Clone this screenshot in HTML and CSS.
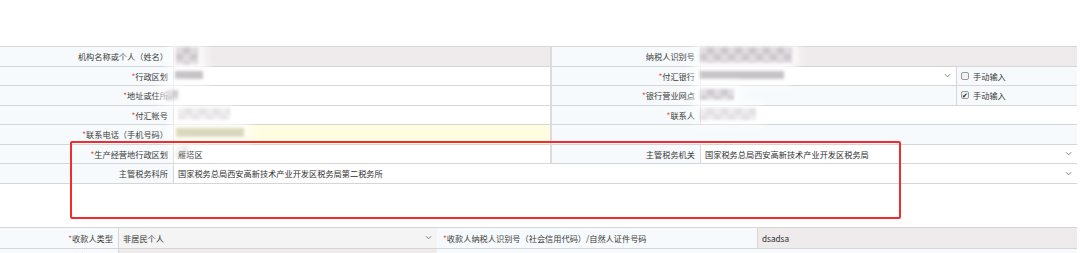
FILE: index.html
```html
<!DOCTYPE html>
<html lang="zh-CN">
<head>
    <meta charset="UTF-8">
    <title>付汇登记</title>
    <link rel="stylesheet" href="styles.css">
</head>
<body>
    <div class="page">
        <div class="form-grid top-grid">
            <!-- 第一行 -->
            <div class="cell label">机构名称或个人（姓名）</div>
            <div class="cell value disabled"></div>
            <div class="cell label sep">纳税人识别号</div>
            <div class="cell value disabled span2"></div>

            <!-- 第二行 -->
            <div class="cell label"><i>*</i>行政区划</div>
            <div class="cell value"></div>
            <div class="cell label sep"><i>*</i>付汇银行</div>
            <div class="cell value select"><span></span><svg class="chevron" viewBox="0 0 8 5"><polyline points="1,1 4,4 7,1"/></svg></div>
            <div class="cell check"><span class="box"></span>手动输入</div>

            <!-- 第三行 -->
            <div class="cell label"><i>*</i>地址或住所</div>
            <div class="cell value"></div>
            <div class="cell label sep"><i>*</i>银行营业网点</div>
            <div class="cell value soft"></div>
            <div class="cell check"><span class="box checked">&#10004;</span>手动输入</div>

            <!-- 第四行 -->
            <div class="cell label"><i>*</i>付汇帐号</div>
            <div class="cell value"></div>
            <div class="cell label sep"><i>*</i>联系人</div>
            <div class="cell value span2"></div>

            <!-- 第五行 -->
            <div class="cell label"><i>*</i>联系电话（手机号码）</div>
            <div class="cell value yellow"></div>
            <div class="cell label sep span3"></div>

            <!-- 第六行 -->
            <div class="cell label"><i>*</i>生产经营地行政区划</div>
            <div class="cell value">雁塔区</div>
            <div class="cell label sep">主管税务机关</div>
            <div class="cell value select span2"><span>国家税务总局西安高新技术产业开发区税务局</span><svg class="chevron" viewBox="0 0 8 5"><polyline points="1,1 4,4 7,1"/></svg></div>

            <!-- 第七行 -->
            <div class="cell label">主管税务科所</div>
            <div class="cell value select span4"><span>国家税务总局西安高新技术产业开发区税务局第二税务所</span><svg class="chevron" viewBox="0 0 8 5"><polyline points="1,1 4,4 7,1"/></svg></div>
        </div>

        <div class="gap-space"></div>

        <div class="form-grid bottom-grid">
            <div class="cell label"><i>*</i>收款人类型</div>
            <div class="cell value select grayish"><span>非居民个人</span><svg class="chevron" viewBox="0 0 8 5"><polyline points="1,1 4,4 7,1"/></svg></div>
            <div class="cell label left"><i>*</i>收款人纳税人识别号（社会信用代码）/自然人证件号码</div>
            <div class="cell value disabled">dsadsa</div>

            <div class="cell label last"><i>*</i>收款人名称</div>
            <div class="cell value disabled"></div>
            <div class="cell label span2"></div>
        </div>

        <!-- 打码区域 -->
        <div class="mosaic m1"></div>
        <div class="mosaic m2"></div>
        <div class="mosaic m3 dark"></div>
        <div class="mosaic m4 dark"></div>
        <div class="mosaic m5"></div>
        <div class="mosaic m6"></div>
        <div class="mosaic m7"></div>
        <div class="mosaic m8"></div>
        <div class="mosaic m9 olive"></div>
        <div class="mosaic m10"></div>

        <!-- 红框标注 -->
        <div class="highlight"></div>
    </div>
</body>
</html>
```

FILE: styles.css
```css
* {
    margin: 0;
    padding: 0;
    box-sizing: border-box;
}

body {
    background: #fff;
    font-family: "Noto Sans CJK SC", "Microsoft YaHei", sans-serif;
    font-size: 8.2px;
    color: #3a3a3a;
}

.page {
    position: relative;
    width: 1080px;
    height: 253px;
    overflow: hidden;
    padding-top: 46px;
}

/* 表格 */
.form-grid {
    display: grid;
    width: 1077px;
    border-top: 1px solid #d6d6d6;
    border-right: 1px solid #d6d6d6;
}

.top-grid {
    grid-template-columns: 173px 377px 150px 256px 121px;
    grid-auto-rows: 19.5px;
}

.bottom-grid {
    grid-template-columns: 118px 319px 320px 320px;
    grid-auto-rows: 21px;
}

.cell {
    display: flex;
    align-items: center;
    border-bottom: 1px solid #d6d6d6;
    white-space: nowrap;
    overflow: hidden;
}

.cell i {
    font-style: normal;
    color: #f0504a;
}

.label {
    background: #f7fafc;
    justify-content: flex-end;
    padding-right: 5px;
}

.label.left {
    justify-content: flex-start;
    padding-left: 6px;
}

.label.last {
    align-items: flex-start;
    padding-top: 1px;
}

.value {
    background: #fff;
    border-left: 1px solid #d6d6d6;
    padding-left: 4px;
    color: #2e2e2e;
}

.sep {
    border-left: 2px solid #dcdcdc;
}

.span2 { grid-column: span 2; }
.span3 { grid-column: span 3; }
.span4 { grid-column: span 4; }

.disabled { background: #efebec; }
.soft { background: #f7fafc; }
.yellow { background: #fffde1; }
.grayish { background: #f4f4f4; }

.select {
    justify-content: space-between;
    padding-right: 5px;
}

.chevron {
    width: 7px;
    height: 5px;
    fill: none;
    stroke: #777;
    stroke-width: 1;
}

/* 复选框 */
.check {
    background: #f7fafc;
    border-left: 1px solid #d6d6d6;
    padding-left: 4px;
    gap: 4px;
}

.box {
    width: 8px;
    height: 8px;
    border: 1px solid #9a9a9a;
    border-radius: 2px;
    background: #f2f2f2;
    font-size: 7px;
    line-height: 6px;
    text-align: center;
    color: #222;
}

.gap-space {
    height: 43px;
}

/* 打码 */
.mosaic {
    position: absolute;
    background-color: #dedade;
    background-image: conic-gradient(#c6c2c6 25%, transparent 0 50%, #c6c2c6 0 75%, transparent 0);
    background-size: 14px 14px;
    filter: blur(1.8px);
    opacity: 0.85;
    box-shadow: 0 0 8px 6px rgba(255, 255, 255, 0.9);
}

.mosaic.dark { background-color: #bcb9bc; background-image: none; }
.mosaic.olive { background-color: #d6d4b8; background-image: none; opacity: 0.9; }

.m1 { left: 176px; top: 47px; width: 22px; height: 18px; }
.m2 { left: 700px; top: 47px; width: 92px; height: 16px; }
.m3 { left: 175px; top: 71px; width: 28px; height: 8px; }
.m4 { left: 700px; top: 71px; width: 84px; height: 8px; }
.m5 { left: 166px; top: 90px; width: 12px; height: 10px; }
.m6 { left: 700px; top: 89px; width: 34px; height: 11px; }
.m7 { left: 178px; top: 108px; width: 52px; height: 12px; opacity: 0.45; }
.m8 { left: 700px; top: 108px; width: 56px; height: 12px; opacity: 0.5; }
.m9 { left: 176px; top: 128px; width: 68px; height: 9px; }
.m10 { left: 176px; top: 146px; width: 12px; height: 12px; opacity: 0.35; }

/* 标注框 */
.highlight {
    position: absolute;
    left: 70px;
    top: 141px;
    width: 831px;
    height: 78px;
    border: 2px solid #f22c2c;
    border-radius: 2px;
}
```
